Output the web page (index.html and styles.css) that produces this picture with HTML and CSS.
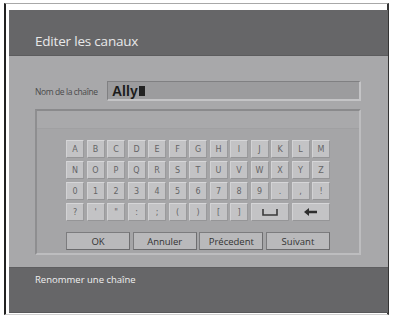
FILE: index.html
```html
<!DOCTYPE html>
<html lang="fr">
<head>
    <meta charset="UTF-8">
    <title>Editer les canaux</title>
    <link rel="stylesheet" href="styles.css">
</head>
<body>
    <div class="frame">
        <div class="screen">
            <header class="top-bar">
                <h1>Editer les canaux</h1>
            </header>

            <main class="content">
                <div class="name-row">
                    <span class="name-label">Nom de la chaîne</span>
                    <div class="name-input">Ally<span class="cursor"></span></div>
                </div>

                <div class="keyboard">
                    <div class="keyboard-top"></div>
                    <div class="keys">
                        <div class="key">A</div>
                        <div class="key">B</div>
                        <div class="key">C</div>
                        <div class="key">D</div>
                        <div class="key">E</div>
                        <div class="key">F</div>
                        <div class="key">G</div>
                        <div class="key">H</div>
                        <div class="key">I</div>
                        <div class="key">J</div>
                        <div class="key">K</div>
                        <div class="key">L</div>
                        <div class="key">M</div>

                        <div class="key">N</div>
                        <div class="key">O</div>
                        <div class="key">P</div>
                        <div class="key">Q</div>
                        <div class="key">R</div>
                        <div class="key">S</div>
                        <div class="key">T</div>
                        <div class="key">U</div>
                        <div class="key">V</div>
                        <div class="key">W</div>
                        <div class="key">X</div>
                        <div class="key">Y</div>
                        <div class="key">Z</div>

                        <div class="key">0</div>
                        <div class="key">1</div>
                        <div class="key">2</div>
                        <div class="key">3</div>
                        <div class="key">4</div>
                        <div class="key">5</div>
                        <div class="key">6</div>
                        <div class="key">7</div>
                        <div class="key">8</div>
                        <div class="key">9</div>
                        <div class="key">.</div>
                        <div class="key">,</div>
                        <div class="key">!</div>

                        <div class="key">?</div>
                        <div class="key">'</div>
                        <div class="key">"</div>
                        <div class="key">:</div>
                        <div class="key">;</div>
                        <div class="key">(</div>
                        <div class="key">)</div>
                        <div class="key">[</div>
                        <div class="key">]</div>
                        <div class="key wide">
                            <svg width="16" height="7" viewBox="0 0 16 7">
                                <path d="M1 0 V6 H15 V0" fill="none" stroke="#3a3a3a" stroke-width="1.6"/>
                            </svg>
                        </div>
                        <div class="key wide">
                            <svg width="14" height="8" viewBox="0 0 14 8">
                                <path d="M0 4 L5 0 V2.8 H13 V5.2 H5 V8 Z" fill="#2e2e2e"/>
                            </svg>
                        </div>
                    </div>

                    <div class="actions">
                        <div class="btn">OK</div>
                        <div class="btn">Annuler</div>
                        <div class="btn">Précedent</div>
                        <div class="btn">Suivant</div>
                    </div>
                </div>
            </main>

            <footer class="bottom-bar">
                <p>Renommer une chaîne</p>
            </footer>
        </div>
    </div>
</body>
</html>
```

FILE: styles.css
```css
body {
    margin: 0;
    padding: 0;
    background-color: #fff;
    font-family: "DejaVu Sans", "Open Sans", sans-serif;
}

.frame {
    width: 385px;
    height: 312px;
    margin: 3px 0 0 4px;
    border-top: 1px solid #a8a8a8;
    border-left: 2px solid #222;
    border-right: 2px solid #333;
    border-bottom: 1px solid #d0d0d0;
    padding: 6px 0 0 3px;
    box-sizing: border-box;
}

.screen {
    width: 379px;
    height: 303px;
    background-color: #a8a8aa;
    display: flex;
    flex-direction: column;
}

.top-bar {
    height: 46px;
    background-color: #666668;
    border-bottom: 1px solid #5c5c5e;
    box-sizing: border-box;
    display: flex;
    align-items: flex-end;
    padding: 0 0 5px 26px;
}

.top-bar h1 {
    margin: 0;
    font-family: "Open Sans", sans-serif;
    font-weight: normal;
    font-size: 13.5px;
    color: #e8e8e8;
    letter-spacing: -0.2px;
}

.content {
    height: 211px;
    padding: 25px 27px 0 26px;
    box-sizing: border-box;
}

.name-row {
    display: flex;
    align-items: center;
    height: 20px;
}

.name-label {
    width: 72px;
    font-family: "Liberation Sans Narrow", "Open Sans", sans-serif;
    font-size: 8.5px;
    color: #4a4a4a;
    letter-spacing: -0.4px;
}

.name-input {
    flex: 1;
    height: 20px;
    box-sizing: border-box;
    background-color: #9c9c9e;
    border-top: 1px solid #808082;
    border-left: 1px solid #808082;
    border-right: 2px solid #c4c4c6;
    border-bottom: 2px solid #c4c4c6;
    padding-left: 4px;
    display: flex;
    align-items: center;
    font-family: "Liberation Sans", Arial, sans-serif;
    font-weight: bold;
    font-size: 14px;
    color: #1c1c1c;
}

.cursor {
    display: inline-block;
    width: 6px;
    height: 10px;
    margin-left: 1px;
    background-color: #222;
}

.keyboard {
    margin-top: 8px;
    height: 146px;
    box-sizing: border-box;
    background-color: #a5a5a7;
    border-top: 2px solid #8a8a8c;
    border-left: 2px solid #8e8e90;
    border-right: 2px solid #bdbdbf;
    border-bottom: 2px solid #bdbdbf;
}

.keyboard-top {
    height: 17px;
    background-color: #a9a9ab;
    border-bottom: 1px solid #a0a0a2;
}

.keys {
    width: 264px;
    margin: 11px auto 0;
    display: grid;
    grid-template-columns: repeat(13, 1fr);
    grid-auto-rows: 18px;
    column-gap: 2.5px;
    row-gap: 3px;
}

.key {
    background-color: #c3c3c5;
    border-top: 1px solid #d6d6d8;
    border-left: 1px solid #d2d2d4;
    border-right: 1px solid #9a9a9c;
    border-bottom: 1px solid #959597;
    box-sizing: border-box;
    display: flex;
    align-items: center;
    justify-content: center;
    font-size: 8px;
    color: #656567;
}

.key.wide {
    grid-column: span 2;
}

.actions {
    width: 264px;
    margin: 11px auto 0;
    display: grid;
    grid-template-columns: repeat(4, 1fr);
    gap: 2.5px;
}

.btn {
    height: 18px;
    box-sizing: border-box;
    background-color: #b9b9bb;
    border: 1px solid #7c7c7e;
    border-right-color: #6e6e70;
    border-bottom-color: #6a6a6c;
    display: flex;
    align-items: center;
    justify-content: center;
    font-family: "Open Sans", sans-serif;
    font-size: 9.5px;
    color: #333;
}

.bottom-bar {
    height: 46px;
    background-color: #666668;
    border-top: 1px solid #5e5e60;
    border-bottom: 1px solid #58585a;
    box-sizing: border-box;
    padding: 5px 0 0 26px;
}

.bottom-bar p {
    margin: 0;
    font-family: "Open Sans", sans-serif;
    font-size: 9.5px;
    color: #f0f0f0;
}
```
